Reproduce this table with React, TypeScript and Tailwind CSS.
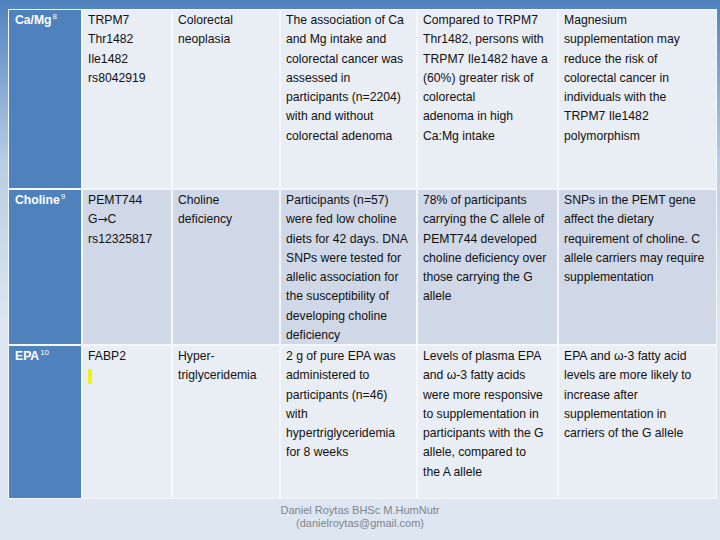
import React from 'react';

type Row = {
  head: string;
  sup: string;
  bg: string;
  height: string;
  cells: string[][];
  mark?: boolean;
};

const ROWS: Row[] = [
  {
    head: 'Ca/Mg',
    sup: '8',
    bg: 'bg-[#e9edf4]',
    height: 'h-[178px]',
    cells: [
      ['TRPM7', 'Thr1482', 'Ile1482', 'rs8042919'],
      ['Colorectal', 'neoplasia'],
      [
        'The association of Ca',
        'and Mg intake and',
        'colorectal cancer was',
        'assessed in',
        'participants (n=2204)',
        'with and without',
        'colorectal adenoma',
      ],
      [
        'Compared to TRPM7',
        'Thr1482, persons with',
        'TRPM7 Ile1482 have a',
        '(60%) greater risk of',
        'colorectal',
        'adenoma in high',
        'Ca:Mg intake',
      ],
      [
        'Magnesium',
        'supplementation may',
        'reduce the risk of',
        'colorectal cancer in',
        'individuals with the',
        'TRPM7 Ile1482',
        'polymorphism',
      ],
    ],
  },
  {
    head: 'Choline',
    sup: '9',
    bg: 'bg-[#d0d8e8]',
    height: 'h-[154px]',
    cells: [
      ['PEMT744', 'G\u2192C', 'rs12325817'],
      ['Choline', 'deficiency'],
      [
        'Participants (n=57)',
        'were fed low choline',
        'diets for 42 days. DNA',
        'SNPs were tested for',
        'allelic association for',
        'the susceptibility of',
        'developing choline',
        'deficiency',
      ],
      [
        '78% of participants',
        'carrying the C allele of',
        'PEMT744 developed',
        'choline deficiency over',
        'those carrying the G',
        'allele',
      ],
      [
        'SNPs in the PEMT gene',
        'affect the dietary',
        'requirement of choline. C',
        'allele carriers may require',
        'supplementation',
      ],
    ],
  },
  {
    head: 'EPA',
    sup: '10',
    bg: 'bg-[#e9edf4]',
    height: 'h-[152px]',
    mark: true,
    cells: [
      ['FABP2'],
      ['Hyper-', 'triglyceridemia'],
      [
        '2 g of pure EPA was',
        'administered to',
        'participants (n=46)',
        'with',
        'hypertriglyceridemia',
        'for 8 weeks',
      ],
      [
        'Levels of plasma EPA',
        'and \u03c9-3 fatty acids',
        'were more responsive',
        'to supplementation in',
        'participants with the G',
        'allele, compared to',
        'the A allele',
      ],
      [
        'EPA and \u03c9-3 fatty acid',
        'levels are more likely to',
        'increase after',
        'supplementation in',
        'carriers of the G allele',
      ],
    ],
  },
];

// arrow glyph drawn with DejaVu so it is full size like the reference
const Line = ({ text }: { text: string }) => {
  if (!text.includes('\u2192')) return <div className="whitespace-nowrap">{text}</div>;
  const [a, b] = text.split('\u2192');
  return (
    <div className="whitespace-nowrap">
      {a}
      <span className="text-[12px]" style={{ fontFamily: '"DejaVu Sans", sans-serif' }}>
        {'\u2192'}
      </span>
      {b}
    </div>
  );
};

export default function App() {
  return (
    <div
      className="w-[720px] h-[540px] overflow-hidden bg-gradient-to-b from-[#4f81bd] via-[#b9cde5] via-30% to-[#dde6f1] to-60%"
      style={{ fontFamily: '"Liberation Sans", Arial, sans-serif' }}
    >
      <div className="pt-[9px] pl-[8px]">
        <div className="grid w-max grid-cols-[72px_88px_106px_135px_139px_157px] gap-[2px] bg-[#f4f7fb] p-[1px]">
          {ROWS.map((r) => (
            <React.Fragment key={r.head}>
              <div className={`${r.height} bg-[#4f81bd] px-[6px] pt-[1px] text-white font-bold text-[12.2px] leading-[19.3px]`}>
                <div className="whitespace-nowrap">
                  {r.head}
                  <span className="relative -top-[5px] ml-[1px] text-[8px] font-normal leading-none">{r.sup}</span>
                </div>
              </div>
              {r.cells.map((lines, ci) => (
                <div key={ci} className={`${r.height} ${r.bg} px-[5px] pt-[1px] text-[12.2px] leading-[19.3px] text-[#111]`}>
                  {lines.map((l, li) => (
                    <Line key={li} text={l} />
                  ))}
                  {ci === 0 && r.mark && <div className="mt-[3px] w-[4px] h-[15px] bg-[#f2f20a]" />}
                </div>
              ))}
            </React.Fragment>
          ))}
        </div>
      </div>
      <div className="mt-[5px] text-center text-[11px] leading-[13px] text-[#7d8590]">
        <div>Daniel Roytas BHSc M.HumNutr</div>
        <div>(danielroytas@gmail.com)</div>
      </div>
    </div>
  );
}
